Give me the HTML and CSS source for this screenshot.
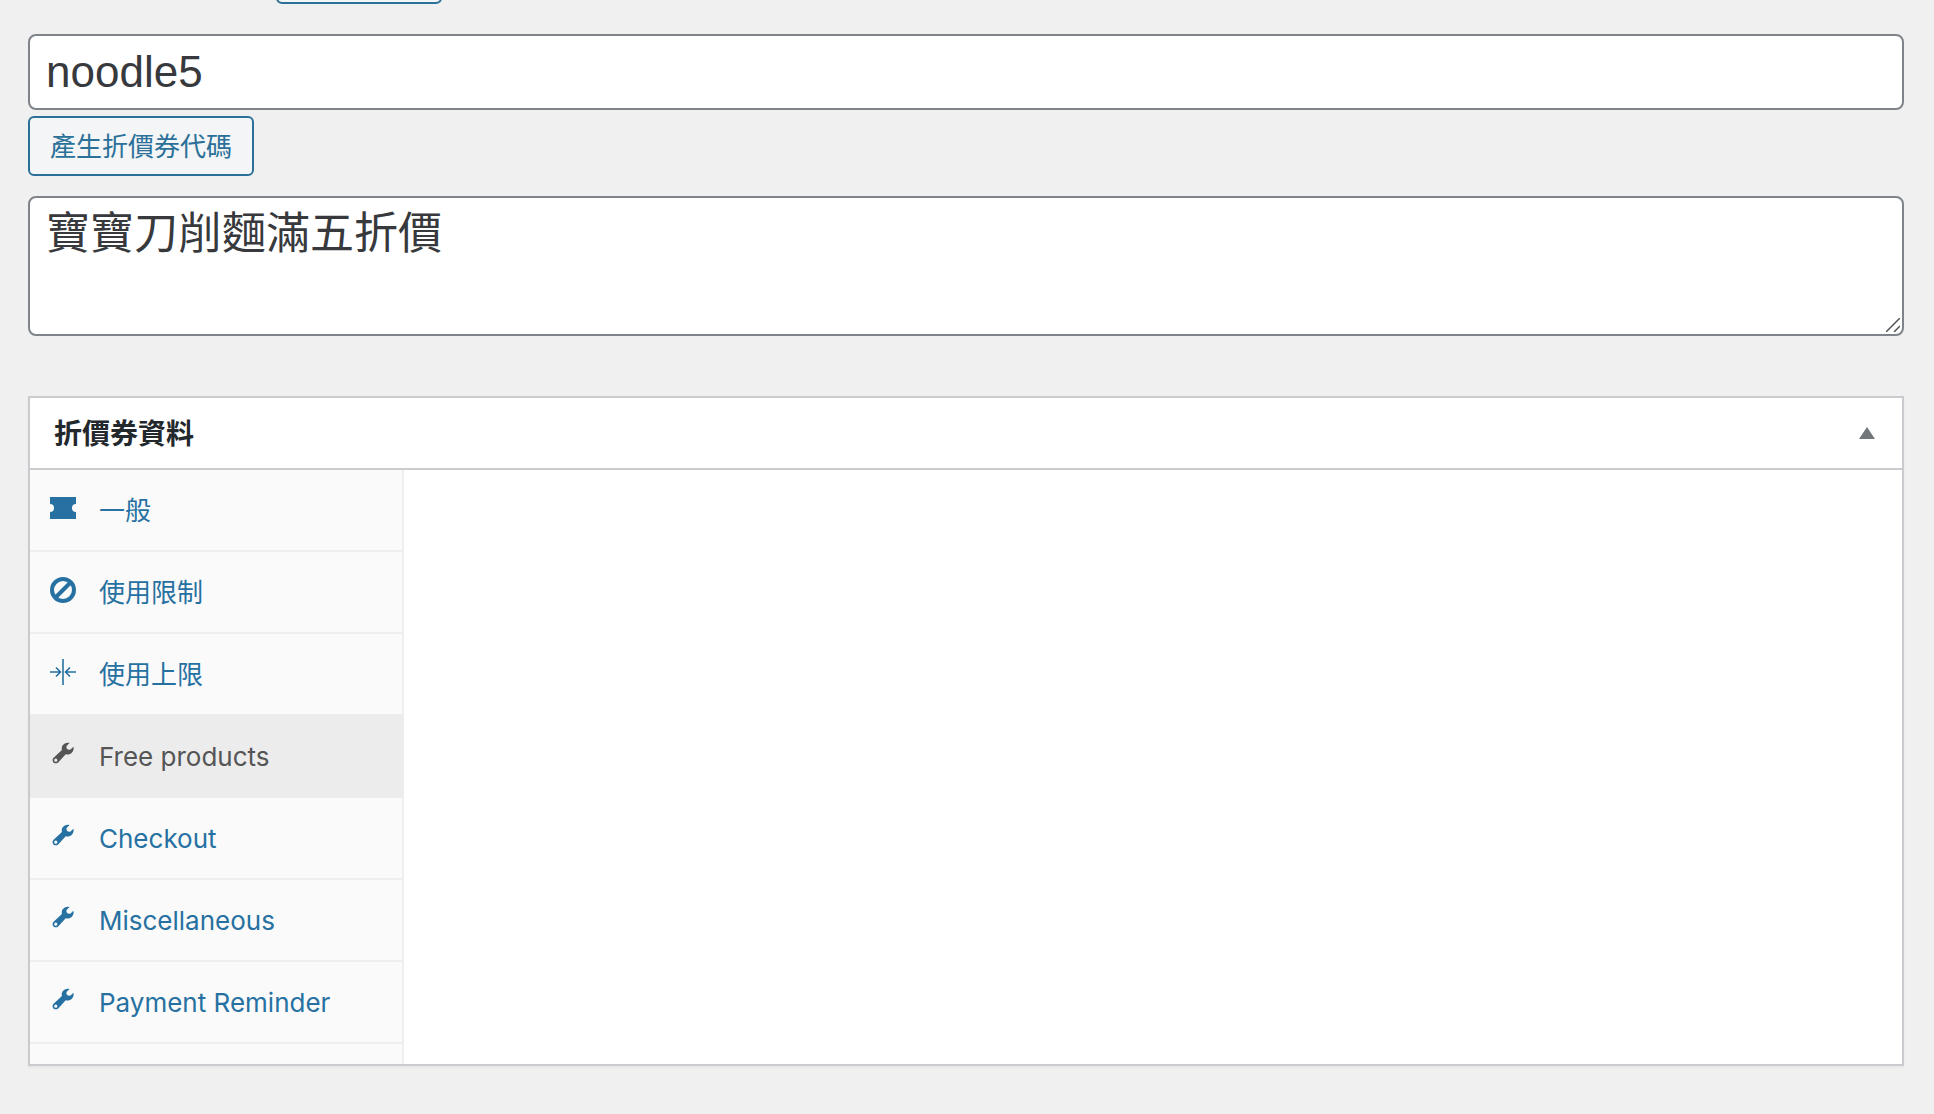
FILE: index.html
```html
<!DOCTYPE html>
<html lang="zh-Hant">
<head>
<meta charset="utf-8">
<meta name="viewport" content="width=device-width, initial-scale=1">
<title>noodle5</title>
<link rel="stylesheet" href="styles.css">
</head>
<body>
<svg class="sprite" aria-hidden="true">
  <symbol id="wrench" viewBox="0 0 26 26">
    <path fill="currentColor" fill-rule="evenodd" d="M19.600 1.900C17 1.100 14 2.100 12.500 4.600C11.700 6 11.600 7.600 11.900 9L3.600 16.700C2.300 18 2.200 20 3.400 21.400C4.800 22.700 6.900 22.600 8.200 21.400L15.700 13.300C18 13.900 20.500 13.200 22 11.400C23.500 9.800 24 7.600 23.400 5.700L20.800 8.200C19.700 9.100 18.100 9 17.200 8C16.200 7.100 16.200 5.600 17 4.600ZM5.800 17.600A1.600 1.600 0 1 1 5.800 20.800A1.600 1.600 0 1 1 5.800 17.600Z"/>
  </symbol>
</svg>
<header class="top-bar"><button type="button" class="button top-button" aria-hidden="true" tabindex="-1"></button></header>
<main class="editor">
  <form class="coupon-form">
    <input class="field code" type="text" value="noodle5" aria-labelledby="generate">
    <button type="button" class="button" id="generate">產生折價券代碼</button>
    <div class="description">
      <textarea class="field" aria-labelledby="panel-title">寶寶刀削麵滿五折價</textarea>
      <svg class="grip" viewBox="0 0 14 14" aria-hidden="true"><path d="M0 14L14 0M8 14L14 8" stroke="#555" stroke-width="1.500" fill="none"/></svg>
    </div>
  </form>
  <section class="panel">
    <div class="panel-header">
      <h2 id="panel-title">折價券資料</h2>
      <button type="button" class="toggle" aria-labelledby="panel-title"><svg viewBox="0 0 16 12"><path d="M8 0L16 12H0Z" fill="currentColor"/></svg></button>
    </div>
    <div class="panel-body">
      <nav class="tabs">
        <a class="tab" href="#general"><svg class="icon" viewBox="0 0 26 26"><path fill="currentColor" d="M0 2H26V9A4 4 0 0 0 26 17V24H0V17A4 4 0 0 0 0 9Z"/></svg><span>一般</span></a>
        <a class="tab" href="#restriction"><svg class="icon" viewBox="0 0 26 26"><g fill="none" stroke="currentColor" stroke-width="4"><circle cx="13" cy="13" r="11"/><path d="M5.500 20.500L20.500 5.500"/></g></svg><span>使用限制</span></a>
        <a class="tab" href="#limits"><svg class="icon" viewBox="0 0 26 26"><g fill="none" stroke="currentColor" stroke-width="1.600"><path d="M13 0V26"/><path d="M0 13H10M6 8.500L10.500 13L6 17.500M26 13H16M20 8.500L15.500 13L20 17.500"/></g></svg><span>使用上限</span></a>
        <a class="tab active" href="#free" aria-current="true"><svg class="icon"><use href="#wrench"/></svg><span>Free products</span></a>
        <a class="tab" href="#checkout"><svg class="icon"><use href="#wrench"/></svg><span>Checkout</span></a>
        <a class="tab" href="#misc"><svg class="icon"><use href="#wrench"/></svg><span>Miscellaneous</span></a>
        <a class="tab" href="#reminder"><svg class="icon"><use href="#wrench"/></svg><span>Payment Reminder</span></a>
      </nav>
      <div class="content"></div>
    </div>
  </section>
</main>
</body>
</html>
```
FILE: styles.css
```css
* {
  box-sizing: border-box;
}

body {
  margin: 0;
  background: #f0f0f0;
  color: #3c434a;
  font: 26px/36px Inter, "Noto Sans CJK TC", sans-serif;
}

.sprite {
  display: none;
}

.top-bar {
  display: flex;
  align-items: flex-end;
  height: 4px;
  padding-left: 276px;
  overflow: hidden;
}

.button {
  height: 60px;
  padding: 2px 20px 0;
  border: 2px solid #2a7099;
  border-radius: 6px;
  background: #f3f5f6;
  color: #2a7099;
  font: inherit;
}

.top-button {
  flex: none;
  width: 166px;
}

.editor {
  padding: 30px 30px 48px 28px;
}

.coupon-form {
  display: flex;
  flex-direction: column;
  align-items: flex-start;
  gap: 6px;
}

.field {
  display: block;
  width: 100%;
  border: 2px solid #7e8489;
  border-radius: 8px;
  background: #fff;
  color: #37393d;
  font: 44px/60px "Liberation Sans", "Noto Sans CJK TC", sans-serif;
}

.code {
  height: 76px;
  padding: 0 16px;
}

.description {
  position: relative;
  width: 100%;
  margin-top: 14px;
}

.description .field {
  height: 140px;
  padding: 6px 16px;
  resize: none;
}

.grip {
  position: absolute;
  right: 4px;
  bottom: 4px;
  width: 14px;
  height: 14px;
}

.panel {
  margin-top: 60px;
  border: 2px solid #c9cbcf;
  background: #fff;
  box-shadow: 0 2px 2px rgba(0, 0, 0, 0.04);
}

.panel-header {
  display: flex;
  align-items: center;
  justify-content: space-between;
  height: 72px;
  padding: 0 27px 0 24px;
  border-bottom: 2px solid #c9cbcf;
}

.panel-header h2 {
  margin: 0;
  padding-top: 2px;
  color: #23282d;
  font-size: 28px;
  font-weight: 600;
}

.toggle {
  display: flex;
  padding: 0;
  border: 0;
  background: none;
  color: #72777c;
}

.toggle svg {
  width: 16px;
  height: 12px;
}

.panel-body {
  display: flex;
}

.tabs {
  flex: none;
  width: 374px;
  padding-bottom: 20px;
  border-right: 2px solid #eee;
  background: #fafafa;
}

.tab {
  display: flex;
  align-items: center;
  gap: 23px;
  height: 82px;
  padding: 2px 20px 0;
  border-bottom: 2px solid #eee;
  color: #2671a1;
  text-decoration: none;
}

.active {
  height: 84px;
  margin: -2px -2px 0 0;
  padding-top: 4px;
  border-bottom-color: #ececec;
  background: #ececec;
  color: #555;
}

.icon {
  flex: none;
  width: 26px;
  height: 26px;
  margin-bottom: 6px;
}

.content {
  flex: 1;
}
```
